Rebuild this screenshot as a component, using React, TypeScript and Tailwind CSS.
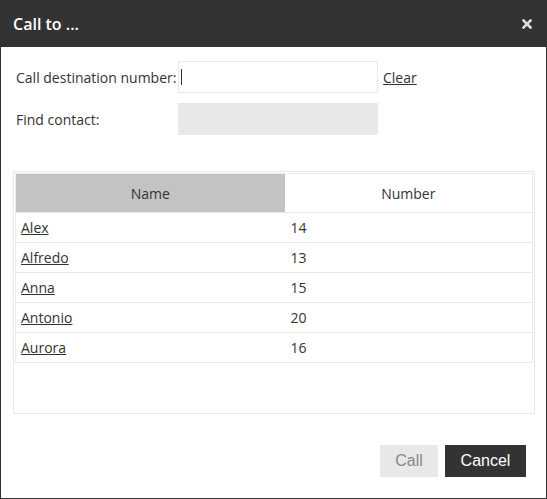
import React from "react";

const contacts = [
  { name: "Alex", number: "14" },
  { name: "Alfredo", number: "13" },
  { name: "Anna", number: "15" },
  { name: "Antonio", number: "20" },
  { name: "Aurora", number: "16" },
];

export default function App() {
  return (
    <div className="w-[547px] h-[499px] bg-white font-['Open_Sans',sans-serif] text-[#333] flex flex-col border-x border-b border-[#333]">
      {/* Title bar */}
      <div className="h-[47px] shrink-0 bg-[#333] flex items-center justify-between pl-[13px] pr-[15px] -mx-px">
        <span className="text-white text-[16px] font-semibold">Call to ...</span>
        <svg width="10" height="10" viewBox="0 0 10 10" className="text-[#ddd]">
          <path d="M1.5 1.5 L8.5 8.5 M8.5 1.5 L1.5 8.5" stroke="currentColor" strokeWidth="2.6" strokeLinecap="square" />
        </svg>
      </div>

      {/* Form */}
      <div className="flex flex-col gap-[10px] pt-[14px] pl-[15px]">
        <div className="flex items-center">
          <label className="w-[162px] text-[14px]">Call destination number:</label>
          <div className="w-[200px] h-[32px] border border-[#e8e8e8] flex items-center pl-[2px]">
            <span className="w-px h-[16px] bg-[#333]" />
          </div>
          <a href="#" className="ml-[5px] text-[14px] underline text-[#333]">Clear</a>
        </div>
        <div className="flex items-center">
          <label className="w-[162px] text-[14px]">Find contact:</label>
          <div className="w-[200px] h-[32px] bg-[#e8e8e8]" />
        </div>
      </div>

      {/* Contacts table */}
      <div className="mt-[36px] ml-[12px] w-[522px] h-[243px] border border-[#e8e8e8] p-px">
        <table className="w-full border border-[#ececec] border-collapse text-[14px]">
          <thead>
            <tr className="h-[39px]">
              <th className="w-[269px] bg-[#c3c3c3] font-normal text-center border-b border-[#e8e8e8]">Name</th>
              <th className="font-normal text-center border-b border-[#e8e8e8]">Number</th>
            </tr>
          </thead>
          <tbody>
            {contacts.map((c) => (
              <tr key={c.name} className="h-[30px] border-b border-[#e8e8e8]">
                <td className="pl-[5px]">
                  <a href="#" className="underline text-[#333]">{c.name}</a>
                </td>
                <td className="pl-[6px]">{c.number}</td>
              </tr>
            ))}
          </tbody>
        </table>
      </div>

      {/* Actions */}
      <div className="mt-auto mb-[21px] flex justify-end gap-[7px] pr-[20px] font-['Liberation_Sans',Arial,sans-serif] text-[16px]">
        <button className="w-[58px] h-[32px] bg-[#e8e8e8] text-[#888]">Call</button>
        <button className="w-[81px] h-[32px] bg-[#333] text-white">Cancel</button>
      </div>
    </div>
  );
}
